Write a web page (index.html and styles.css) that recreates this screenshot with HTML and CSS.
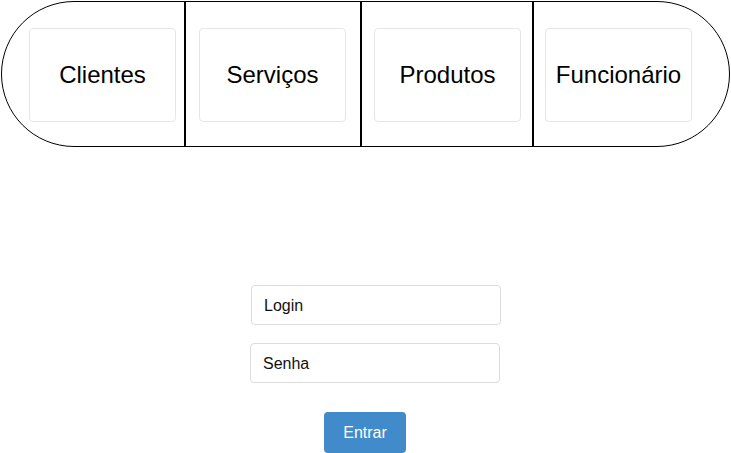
FILE: index.html
```html
<!DOCTYPE html>
<html lang="pt">
<head>
<meta charset="utf-8">
<title>Menu</title>
<link rel="stylesheet" href="styles.css">
</head>
<body>
<div class="page">
  <nav class="nav">
    <div class="cell cell-1"><a class="card" href="#">Clientes</a></div>
    <div class="cell cell-2"><a class="card" href="#">Serviços</a></div>
    <div class="cell cell-3"><a class="card" href="#">Produtos</a></div>
    <div class="cell cell-4"><a class="card" href="#">Funcionário</a></div>
  </nav>
  <form class="login">
    <input class="field field-login" type="text" placeholder="Login">
    <input class="field field-pass" type="password" placeholder="Senha">
    <div class="actions"><button class="btn" type="button">Entrar</button></div>
  </form>
</div>
</body>
</html>
```
FILE: styles.css
```css
* { box-sizing: border-box; }
html, body { margin: 0; padding: 0; background: #fff; }
body { font-family: "Liberation Sans", Arial, sans-serif; color: #000; }
.page { padding: 1px 1px 0 1px; }
.nav {
  display: flex;
  width: 729px;
  height: 146px;
  border: 1px solid #000;
  border-radius: 73px;
}
.cell { display: flex; align-items: flex-start; padding-top: 26px; }
.cell-1 { width: 184px; padding-left: 27px; border-right: 2px solid #000; }
.cell-2 { width: 176px; padding-left: 13px; border-right: 2px solid #000; }
.cell-3 { width: 172px; padding-left: 12px; border-right: 2px solid #000; }
.cell-4 { flex: 1; padding-left: 11px; }
.card {
  display: flex;
  align-items: center;
  justify-content: center;
  width: 147px;
  height: 94px;
  border: 1px solid #e6e6e6;
  border-radius: 4px;
  font-size: 24px;
  color: #000;
  text-decoration: none;
}
.login { display: flex; flex-direction: column; align-items: flex-start; padding-left: 249px; margin-top: 138px; }
.field {
  width: 250px;
  height: 40px;
  border: 1px solid #dcdcdc;
  border-radius: 4px;
  padding: 2px 12px 0;
  font-family: "Liberation Sans", Arial, sans-serif;
  font-size: 16px;
  color: #111;
  outline: none;
}
.field::placeholder { color: #111; opacity: 1; }
.field-login { margin-left: 1px; }
.field-pass { margin-top: 18px; }
.actions { align-self: stretch; margin-left: -249px; display: flex; justify-content: center; margin-top: 29px; }
.btn {
  width: 82px;
  height: 41px;
  border: none;
  border-radius: 4px;
  background: #428bca;
  color: #fff;
  font-family: "Liberation Sans", Arial, sans-serif;
  font-size: 16px;
  padding: 0;
  margin-right: 1px;
}
```
